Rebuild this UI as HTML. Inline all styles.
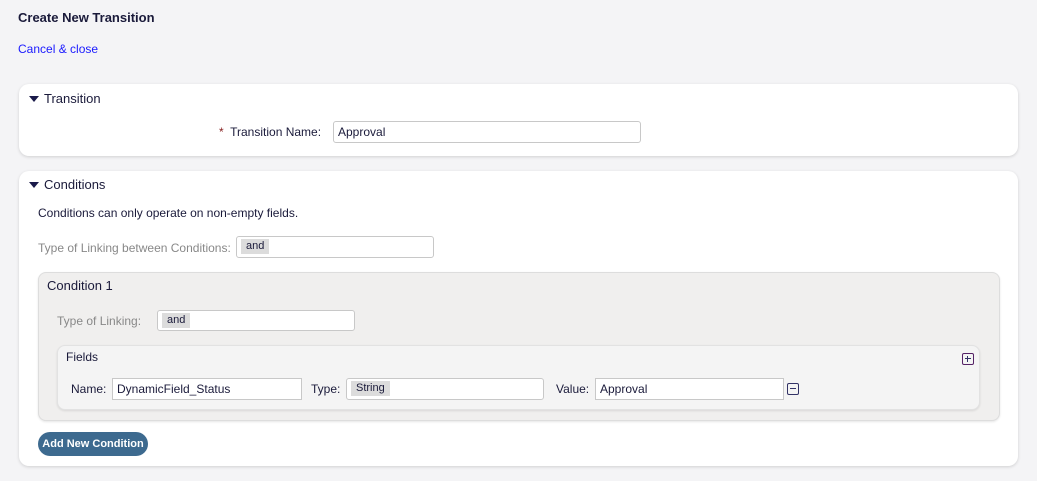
<!DOCTYPE html><html><head><style>
body{margin:0;width:1037px;height:481px;background:#f4f4f6;font-family:"Liberation Sans",sans-serif;font-size:12px;color:#1a1a3a;position:relative;overflow:hidden}
.a{position:absolute}
.box{position:absolute;background:#fff;border-radius:10px;box-shadow:0 1px 3px rgba(0,0,0,.15)}
.inp{position:absolute;background:#fff;border:1px solid #c8c8c8;border-radius:3px;height:20px;box-sizing:border-box;font-size:12px;line-height:20px;padding-left:4px}
.tag{display:inline-block;background:#dcdcdc;padding:0 5px;font-size:11px;line-height:15px;margin-top:2px;margin-left:0;vertical-align:top}
.tri{display:inline-block;width:0;height:0;border-left:5px solid transparent;border-right:5px solid transparent;border-top:6px solid #1a1a4a;margin-right:5px;vertical-align:1px}
.lbl{position:absolute;color:#888}
.ic{position:absolute;width:10px;height:10px;border:1px solid #333366;border-radius:2px}
</style></head><body>
<div class="a" style="left:18px;top:10px;font-weight:bold;font-size:13px">Create New Transition</div>
<div class="a" style="left:18px;top:42px;color:#1a1aff">Cancel &amp; close</div>
<div class="box" style="left:19px;top:84px;width:999px;height:72px"></div>
<div class="a" style="left:29px;top:91px;font-size:13px"><span class="tri"></span>Transition</div>
<div class="a" style="left:219px;top:125px"><span style="color:#822">*</span>&nbsp; Transition Name:</div>
<div class="inp" style="left:333px;top:121px;width:308px;height:22px">Approval</div>
<div class="box" style="left:19px;top:171px;width:999px;height:295px"></div>
<div class="a" style="left:29px;top:177px;font-size:13px"><span class="tri"></span>Conditions</div>
<div class="a" style="left:38px;top:206px">Conditions can only operate on non-empty fields.</div>
<div class="lbl" style="left:38px;top:241px">Type of Linking between Conditions:</div>
<div class="inp" style="left:236px;top:236px;width:198px;height:22px"><span class="tag">and</span></div>
<div class="a" style="left:38px;top:272px;width:962px;height:149px;box-sizing:border-box;background:#f0efee;border:1px solid #ddd;border-radius:8px;box-shadow:0 1px 2px rgba(0,0,0,.1)"></div>
<div class="a" style="left:47px;top:278px;font-size:13px">Condition 1</div>
<div class="lbl" style="left:57px;top:314px">Type of Linking:</div>
<div class="inp" style="left:157px;top:310px;width:198px;height:21px"><span class="tag">and</span></div>
<div class="a" style="left:57px;top:345px;width:923px;height:65px;box-sizing:border-box;background:#f4f4f4;border:1px solid #e2e2e2;border-radius:8px;box-shadow:0 1px 2px rgba(0,0,0,.1)"></div>
<div class="a" style="left:66px;top:350px">Fields</div>
<div class="a" style="left:71px;top:382px">Name:</div>
<div class="inp" style="left:112px;top:378px;width:190px;height:22px;border-radius:0">DynamicField_Status</div>
<div class="a" style="left:311px;top:382px">Type:</div>
<div class="inp" style="left:346px;top:378px;width:198px;height:22px"><span class="tag">String</span></div>
<div class="a" style="left:556px;top:382px">Value:</div>
<div class="inp" style="left:595px;top:378px;width:189px;height:22px;border-radius:0">Approval</div>
<div class="ic" style="left:787px;top:383px"><div class="a" style="left:2px;top:4px;width:6px;height:1px;background:#333366"></div></div>
<div class="ic" style="left:962px;top:353px;border-color:#552266"><div class="a" style="left:2px;top:4px;width:6px;height:1px;background:#333366"></div><div class="a" style="left:4px;top:2px;width:1px;height:6px;background:#333366"></div></div>
<div class="a" style="left:38px;top:432px;width:110px;height:24px;background:#3d6a8f;border-radius:12px;color:#fff;font-weight:bold;font-size:11px;line-height:24px;text-align:center">Add New Condition</div>
</body></html>
